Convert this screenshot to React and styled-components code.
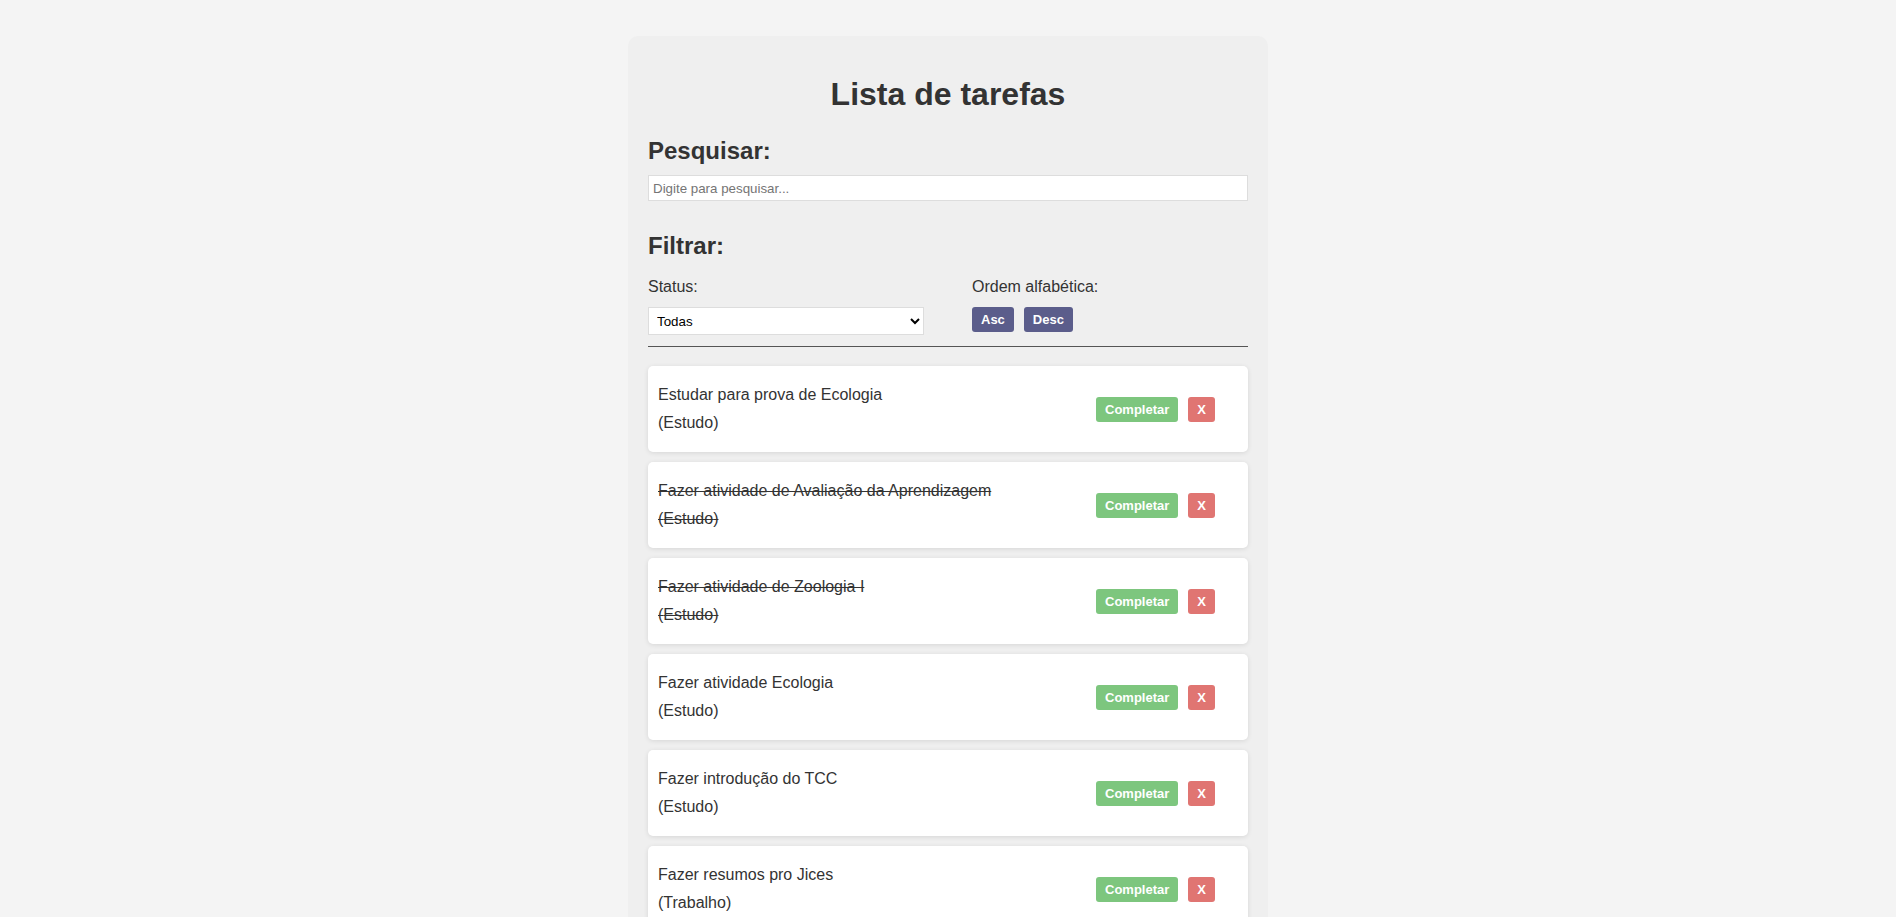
import { useState } from "react"
import styled, { createGlobalStyle } from "styled-components"

const GlobalStyle = createGlobalStyle`
  body {
    margin: 0;
    background: #f4f4f4;
    font-family: "Liberation Sans", Arial, sans-serif;
    color: #333;
  }
`

const initialTodos = [
  { id: 1, text: "Estudar para prova de Ecologia", category: "Estudo", done: false },
  { id: 2, text: "Fazer atividade de Avaliação da Aprendizagem", category: "Estudo", done: true },
  { id: 3, text: "Fazer atividade de Zoologia I", category: "Estudo", done: true },
  { id: 4, text: "Fazer atividade Ecologia", category: "Estudo", done: false },
  { id: 5, text: "Fazer introdução do TCC", category: "Estudo", done: false },
  { id: 6, text: "Fazer resumos pro Jices", category: "Trabalho", done: false },
]

function App() {
  const [todos, setTodos] = useState(initialTodos)
  const [search, setSearch] = useState("")
  const [filter, setFilter] = useState("All")
  const [sort, setSort] = useState(null)

  const toggle = (id) =>
    setTodos(todos.map((t) => (t.id === id ? { ...t, done: !t.done } : t)))
  const remove = (id) => setTodos(todos.filter((t) => t.id !== id))

  const visible = todos
    .filter((t) =>
      filter === "All" ? true : filter === "Completed" ? t.done : !t.done
    )
    .filter((t) => t.text.toLowerCase().includes(search.toLowerCase()))
    .sort((a, b) =>
      sort === "Asc"
        ? a.text.localeCompare(b.text)
        : sort === "Desc"
        ? b.text.localeCompare(a.text)
        : 0
    )

  return (
    <>
      <GlobalStyle />
      <Container>
        <Title>Lista de tarefas</Title>
        <Section>
          <SectionTitle>Pesquisar:</SectionTitle>
          <SearchInput
            type="text"
            placeholder="Digite para pesquisar..."
            value={search}
            onChange={(e) => setSearch(e.target.value)}
          />
        </Section>
        <Section $spaced>
          <SectionTitle>Filtrar:</SectionTitle>
          <FilterRow>
            <FilterCol>
              <Label>Status:</Label>
              <Select value={filter} onChange={(e) => setFilter(e.target.value)}>
                <option value="All">Todas</option>
                <option value="Completed">Completas</option>
                <option value="Incomplete">Incompletas</option>
              </Select>
            </FilterCol>
            <FilterCol>
              <Label>Ordem alfabética:</Label>
              <ButtonRow>
                <SortButton onClick={() => setSort("Asc")}>Asc</SortButton>
                <SortButton onClick={() => setSort("Desc")}>Desc</SortButton>
              </ButtonRow>
            </FilterCol>
          </FilterRow>
        </Section>
        <TodoList>
          {visible.map((todo) => (
            <Todo key={todo.id}>
              <Content $done={todo.done}>
                <p>{todo.text}</p>
                <p>({todo.category})</p>
              </Content>
              <Actions>
                <ActionButton $variant="complete" onClick={() => toggle(todo.id)}>
                  Completar
                </ActionButton>
                <ActionButton $variant="remove" onClick={() => remove(todo.id)}>
                  X
                </ActionButton>
              </Actions>
            </Todo>
          ))}
        </TodoList>
      </Container>
    </>
  )
}

export default App

const Container = styled.div`
  width: 640px;
  box-sizing: border-box;
  margin: 36px auto 20px;
  padding: 20px;
  background: #efefef;
  border-radius: 10px;
`

const Title = styled.h1`
  margin: 20px 0 0;
  text-align: center;
  font-size: 32px;
  font-weight: bold;
  color: #333;
`

const Section = styled.div`
  margin-top: ${(p) => (p.$spaced ? "31px" : "24px")};
`

const SectionTitle = styled.h2`
  margin: 0 0 10px;
  font-size: 24px;
  font-weight: bold;
  color: #333;
`

const SearchInput = styled.input`
  display: block;
  width: 100%;
  box-sizing: border-box;
  height: 26px;
  padding: 0 4px;
  border: 1px solid #ddd;
  background: #fff;
  font-family: "Liberation Sans", Arial, sans-serif;
  font-size: 13.33px;
  color: #333;
  outline: none;

  &::placeholder {
    color: #757575;
  }
`

const FilterRow = styled.div`
  display: grid;
  grid-template-columns: 1fr 1fr;
  column-gap: 48px;
  margin-top: 18px;
  padding-bottom: 11px;
  border-bottom: 1px solid #555;
`

const FilterCol = styled.div`
  display: flex;
  flex-direction: column;
  align-items: flex-start;
  gap: 11px;
`

const Label = styled.span`
  font-size: 16px;
  color: #333;
`

const Select = styled.select`
  width: 100%;
  height: 28px;
  padding: 0 4px;
  border: 1px solid #ddd;
  border-radius: 0;
  background: #fff;
  font-family: "Liberation Sans", Arial, sans-serif;
  font-size: 13.33px;
  color: #000;
`

const ButtonRow = styled.div`
  display: flex;
  gap: 10px;
`

const SortButton = styled.button`
  height: 25px;
  padding: 0 9px;
  border: none;
  border-radius: 3px;
  background: #5b5d8b;
  color: #fff;
  font-family: "Liberation Sans", Arial, sans-serif;
  font-size: 13px;
  font-weight: bold;
  cursor: pointer;
`

const TodoList = styled.div`
  display: flex;
  flex-direction: column;
  gap: 10px;
  margin-top: 19px;
`

const Todo = styled.div`
  display: flex;
  align-items: center;
  justify-content: space-between;
  padding: 15px 10px;
  background: #fff;
  border-radius: 5px;
  box-shadow: 0 1px 5px rgba(0, 0, 0, 0.1);
`

const Content = styled.div`
  font-size: 16px;
  line-height: 28px;
  color: #333;
  text-decoration: ${(p) => (p.$done ? "line-through" : "none")};

  p {
    margin: 0;
  }
`

const ActionButton = styled.button`
  height: 25px;
  padding: 0 9px;
  border: none;
  border-radius: 3px;
  background: ${(p) => (p.$variant === "remove" ? "#e07572" : "#7dc67e")};
  color: #fff;
  font-family: "Liberation Sans", Arial, sans-serif;
  font-size: 13px;
  font-weight: bold;
  cursor: pointer;
`

const Actions = styled.div`
  display: flex;
  gap: 10px;
  padding-right: 23px;
`
